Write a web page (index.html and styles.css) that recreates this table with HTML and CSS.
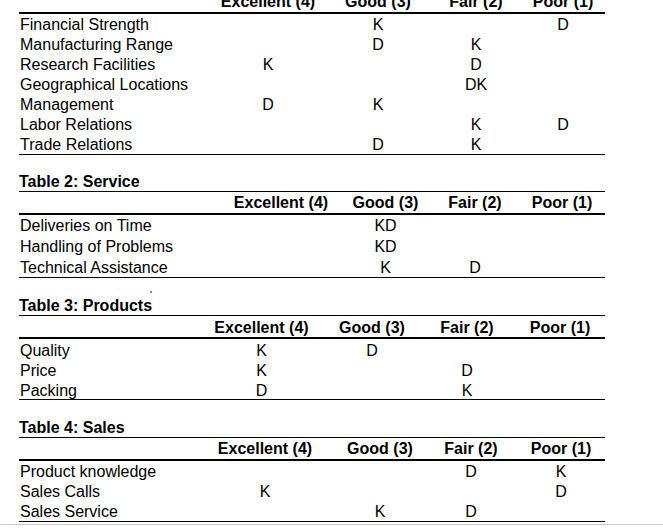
FILE: index.html
```html
<!DOCTYPE html>
<html>
<head>
<meta charset="utf-8">
<link rel="stylesheet" href="styles.css">
</head>
<body>
<div class="page">
  <div class="tbl t1">
    <div class="row head"><span></span><span>Excellent (4)</span><span>Good (3)</span><span>Fair (2)</span><span>Poor (1)</span></div>
    <div class="body">
      <div class="row"><span>Financial Strength</span><span></span><span>K</span><span></span><span>D</span></div>
      <div class="row"><span>Manufacturing Range</span><span></span><span>D</span><span>K</span><span></span></div>
      <div class="row"><span>Research Facilities</span><span>K</span><span></span><span>D</span><span></span></div>
      <div class="row"><span>Geographical Locations</span><span></span><span></span><span>DK</span><span></span></div>
      <div class="row"><span>Management</span><span>D</span><span>K</span><span></span><span></span></div>
      <div class="row"><span>Labor Relations</span><span></span><span></span><span>K</span><span>D</span></div>
      <div class="row"><span>Trade Relations</span><span></span><span>D</span><span>K</span><span></span></div>
    </div>
  </div>

  <div class="tbl t2">
    <div class="caption">Table 2: Service</div>
    <div class="row head"><span></span><span>Excellent (4)</span><span>Good (3)</span><span>Fair (2)</span><span>Poor (1)</span></div>
    <div class="body">
      <div class="row"><span>Deliveries on Time</span><span></span><span>KD</span><span></span><span></span></div>
      <div class="row"><span>Handling of Problems</span><span></span><span>KD</span><span></span><span></span></div>
      <div class="row"><span>Technical Assistance</span><span></span><span>K</span><span>D</span><span></span></div>
    </div>
  </div>

  <div class="tbl t3">
    <div class="caption">Table 3: Products</div>
    <div class="row head"><span></span><span>Excellent (4)</span><span>Good (3)</span><span>Fair (2)</span><span>Poor (1)</span></div>
    <div class="body">
      <div class="row"><span>Quality</span><span>K</span><span>D</span><span></span><span></span></div>
      <div class="row"><span>Price</span><span>K</span><span></span><span>D</span><span></span></div>
      <div class="row"><span>Packing</span><span>D</span><span></span><span>K</span><span></span></div>
    </div>
  </div>

  <div class="tbl t4">
    <div class="caption">Table 4: Sales</div>
    <div class="row head"><span></span><span>Excellent (4)</span><span>Good (3)</span><span>Fair (2)</span><span>Poor (1)</span></div>
    <div class="body">
      <div class="row"><span>Product knowledge</span><span></span><span></span><span>D</span><span>K</span></div>
      <div class="row"><span>Sales Calls</span><span>K</span><span></span><span></span><span>D</span></div>
      <div class="row"><span>Sales Service</span><span></span><span>K</span><span>D</span><span></span></div>
    </div>
  </div>

  <span class="dot"></span>
</div>
</body>
</html>
```

FILE: styles.css
```css
html, body {
  margin: 0;
  padding: 0;
  background: #fff;
}

body {
  font-family: "Liberation Sans", Arial, sans-serif;
  font-size: 16px;
  color: #000;
}

.page {
  position: relative;
  margin-top: -9px;
  padding-bottom: 2px;
  border-bottom: 1px solid #c6c6c6;
}

.tbl {
  width: 586px;
  margin-left: 19px;
}

.t1 { --cols: 192px 114px 106px 90px 84px; }
.t2 { --cols: 203px 118px 91px 88px 86px; margin-top: 17px; }
.t3 { --cols: 179px 127px 94px 96px 90px; margin-top: 18px; }
.t4 { --cols: 176px 140px 90px 92px 88px; margin-top: 18px; }

.caption {
  font-weight: bold;
  height: 19px;
  line-height: 19px;
  border-bottom: 1px solid #000;
  white-space: nowrap;
}

.row {
  display: grid;
  grid-template-columns: var(--cols);
}

.row span {
  text-align: center;
  white-space: nowrap;
}

.row span:first-child {
  text-align: left;
  padding-left: 1px;
}

.head {
  height: 20px;
  padding-top: 1px;
  line-height: 20px;
  font-weight: bold;
  border-bottom: 2px solid #000;
}

.body {
  border-bottom: 1px solid #000;
}

.body .row {
  height: 19px;
  padding-top: 1px;
  line-height: 19px;
}

.t2 .body .row {
  height: 20px;
}

.t2 .body .row:last-child {
  height: 19px;
}

.t3 .head {
  height: 19px;
  padding-top: 2px;
}

.t3 .body .row {
  height: 18px;
  padding-top: 2px;
}

.dot {
  position: absolute;
  left: 150px;
  top: 300px;
  width: 2px;
  height: 2px;
  background: #4a4af0;
  border-radius: 1px;
}
```
